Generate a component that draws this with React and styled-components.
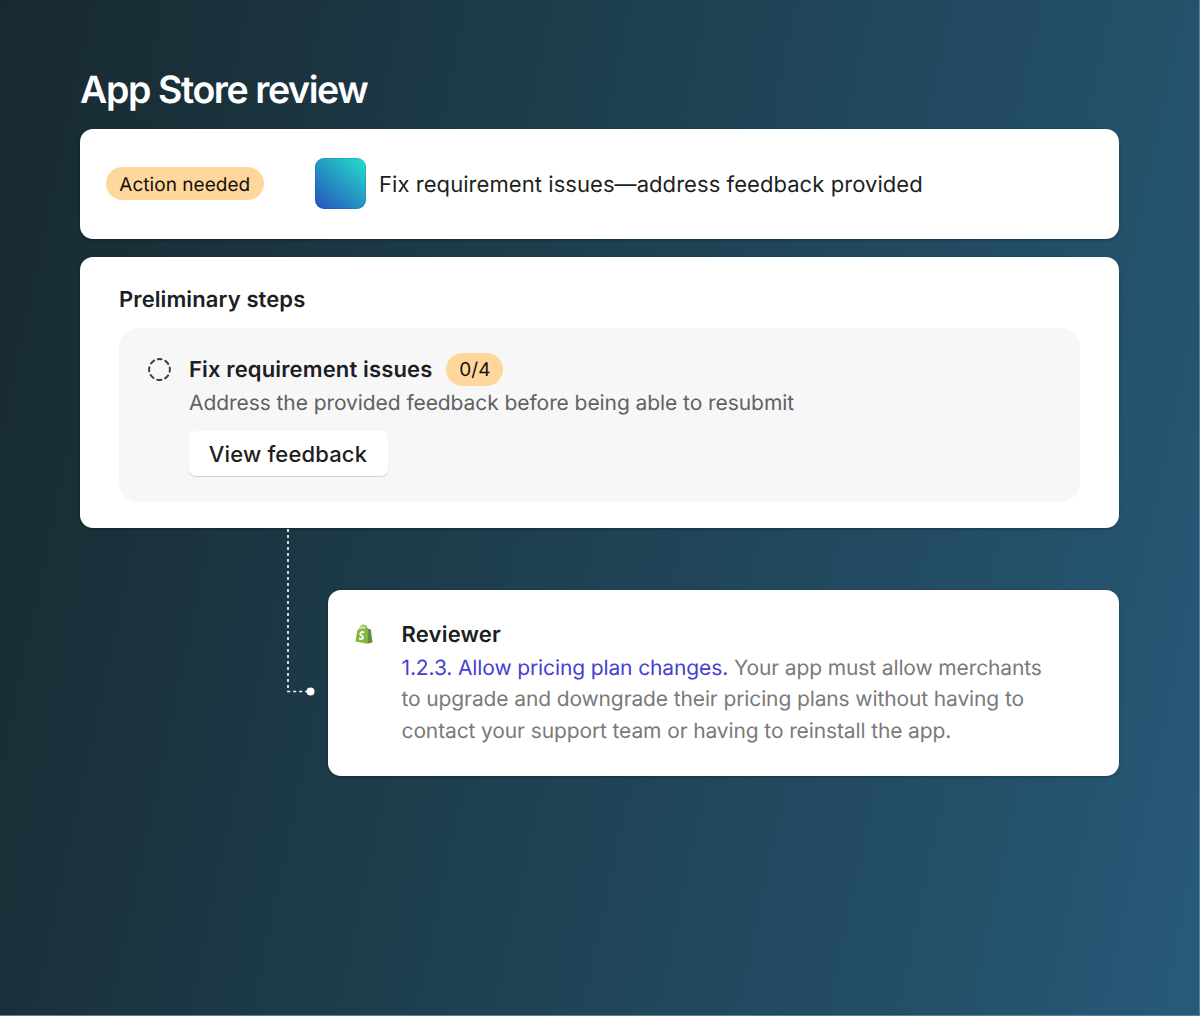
import React from "react";
import styled, {createGlobalStyle} from "styled-components";

const GlobalStyle = createGlobalStyle`
*{
    box-sizing: border-box;
}
body{
    margin: 0;
    font-family: Inter, "Liberation Sans", sans-serif;
    text-rendering: geometricPrecision;
    color: #1c1e21;
}
h1,h2,h3,p{
    margin: 0;
}
`;

function DashedCircle() {
	return (
		<svg width="26" height="26" viewBox="0 0 26 26" fill="none">
			<circle
				cx="12.5"
				cy="12.5"
				r="10.4"
				stroke="#3d3d3d"
				strokeWidth="2"
				strokeLinecap="round"
				strokeDasharray="4.2 3.968"
				strokeDashoffset="2.1"
				transform="rotate(-90 12.5 12.5)"
			/>
		</svg>
	);
}

function ShopifyBag() {
	return (
		<svg width="18" height="20" viewBox="0 0 18 20" fill="none">
			<path
				d="M4.6 5.6C5 3 6.6 1 8.3 1c1.5 0 2.2 1.6 2.3 4M6.8 5.2C7.4 2.8 8.8 1.5 10 1.6c1.2.1 1.7 1.4 1.9 2.9"
				stroke="#95bf47"
				strokeWidth="1.1"
			/>
			<path d="M2.3 5.7 12.3 3.8V19.8L.5 17.6Z" fill="#86b83a" />
			<path d="M12.3 3.8 13.6 5.1 15.8 5.3 17.5 18.5 12.3 19.8Z" fill="#5e8e3e" />
			<path
				d="M9.2 8.5C7.6 7.6 5.4 8.1 5.3 9.9c-.1 1.8 2.9 1.8 2.7 3.7-.2 1.8-2.4 1.7-3.9.6"
				stroke="#fff"
				strokeWidth="1.9"
			/>
		</svg>
	);
}

function Connector() {
	return (
		<ConnectorLine width="30" height="170" viewBox="0 0 30 170" fill="none">
			<path d="M3 1V163.5" stroke="#fff" strokeWidth="1.6" strokeDasharray="3 3" />
			<path d="M2.2 163.5H22" stroke="#fff" strokeWidth="1.6" strokeDasharray="3 3" />
			<circle cx="25.5" cy="163.5" r="4" fill="#fff" />
		</ConnectorLine>
	);
}

export default function App() {
	return (
		<Page>
			<GlobalStyle />
			<Title>App Store review</Title>
			<StatusCard>
				<Badge>Action needed</Badge>
				<AppLogo />
				<StatusText>Fix requirement issues—address feedback provided</StatusText>
			</StatusCard>
			<StepsCard>
				<StepsTitle>Preliminary steps</StepsTitle>
				<Step>
					<DashedCircle />
					<StepContent>
						<StepHeader>
							<StepTitle>Fix requirement issues</StepTitle>
							<Badge $compact>0/4</Badge>
						</StepHeader>
						<StepText>
							Address the provided feedback before being able to resubmit
						</StepText>
						<Button type="button">View feedback</Button>
					</StepContent>
				</Step>
			</StepsCard>
			<ReviewRow>
				<Connector />
				<ReviewCard>
					<ShopifyBag />
					<div>
						<Reviewer>Reviewer</Reviewer>
						<ReviewText>
							<Requirement>1.2.3. Allow pricing plan changes.</Requirement> Your app
							must allow merchants
							<br />
							to upgrade and downgrade their pricing plans without having to
							<br />
							contact your support team or having to reinstall the app.
						</ReviewText>
					</div>
				</ReviewCard>
			</ReviewRow>
		</Page>
	);
}

const Page = styled.main`
width: 1200px;
height: 1016px;
padding: 66px 80.5px 0 80px;
border-right: 1px solid #5b8199;
border-bottom: 1px solid #5b8199;
background: linear-gradient(102deg, #18292f 0%, #1d3c4b 38%, #245069 82%, #275a7a 100%);
`;

const Title = styled.h1`
height: 63px;
font-size: 37.5px;
font-weight: 600;
line-height: 50px;
letter-spacing: -1.4px;
color: #fff;
`;

const Card = styled.section`
background: #fff;
border-radius: 13px;
box-shadow: 0 1px 3px rgba(0,0,0,0.3);
`;

const StatusCard = styled(Card)`
display: flex;
align-items: center;
height: 109.5px;
padding: 0 26px;
`;

const Badge = styled.span`
display: flex;
align-items: center;
justify-content: center;
width: ${(props) => (props.$compact ? "57px" : "157.5px")};
height: 33px;
padding-top: ${(props) => (props.$compact ? "0" : "1px")};
border-radius: 17px;
background: #ffd79d;
color: #14110c;
font-size: 19px;
letter-spacing: ${(props) => (props.$compact ? "0" : "0.03px")};
`;

const AppLogo = styled.div`
width: 51px;
height: 51px;
margin: 0 13px 0 51.5px;
border-radius: 9px;
background: linear-gradient(42deg, #2850bd 0%, #2591c2 45%, #25d8cb 95%);
box-shadow: inset 0 0 0 1px rgba(20,60,120,0.15);
`;

const StatusText = styled.p`
padding-top: 2px;
font-size: 22px;
line-height: 32px;
letter-spacing: 0.06px;
`;

const StepsCard = styled(Card)`
height: 270.5px;
margin-top: 18.5px;
padding: 26px 39px;
`;

const StepsTitle = styled.h2`
font-size: 22px;
font-weight: 600;
line-height: 34px;
letter-spacing: 0.1px;
`;

const Step = styled.div`
display: flex;
align-items: flex-start;
gap: 16px;
height: 174px;
margin-top: 11px;
padding: 25px 28px;
border-radius: 19px;
background: #f7f7f7;
> svg{
    margin-top: 4px;
}
`;

const StepContent = styled.div`
display: flex;
flex-direction: column;
align-items: flex-start;
`;

const StepHeader = styled.div`
display: flex;
align-items: center;
gap: 14px;
height: 33px;
`;

const StepTitle = styled.h3`
padding-top: 1px;
font-size: 22px;
font-weight: 600;
line-height: 32px;
letter-spacing: 0.14px;
`;

const StepText = styled.p`
margin-top: 2px;
font-size: 21px;
line-height: 32px;
letter-spacing: -0.07px;
color: #616161;
`;

const Button = styled.button`
width: 199px;
height: 45px;
margin-top: 11px;
padding: 0 1px 0 0;
border: none;
border-radius: 7px;
background: #fff;
box-shadow: 0 1px 1px rgba(0,0,0,0.16);
color: #1c1e21;
font-family: inherit;
font-size: 22px;
font-weight: 500;
letter-spacing: 0.16px;
`;

const ReviewRow = styled.div`
display: flex;
`;

const ConnectorLine = styled.svg`
margin: 0 12.5px 0 205px;
`;

const ReviewCard = styled(Card)`
display: flex;
align-items: flex-start;
flex: 1;
gap: 28.5px;
height: 185.5px;
margin-top: 62.5px;
padding: 28.5px 27.5px;
> svg{
    margin-top: 5.5px;
}
`;

const Reviewer = styled.h3`
font-size: 22px;
font-weight: 600;
line-height: 32px;
letter-spacing: 0.2px;
`;

const ReviewText = styled.p`
margin-top: 2.3px;
font-size: 21px;
line-height: 31.5px;
letter-spacing: -0.12px;
white-space: nowrap;
color: #7a7a7a;
`;

const Requirement = styled.span`
color: #4640cf;
`;
